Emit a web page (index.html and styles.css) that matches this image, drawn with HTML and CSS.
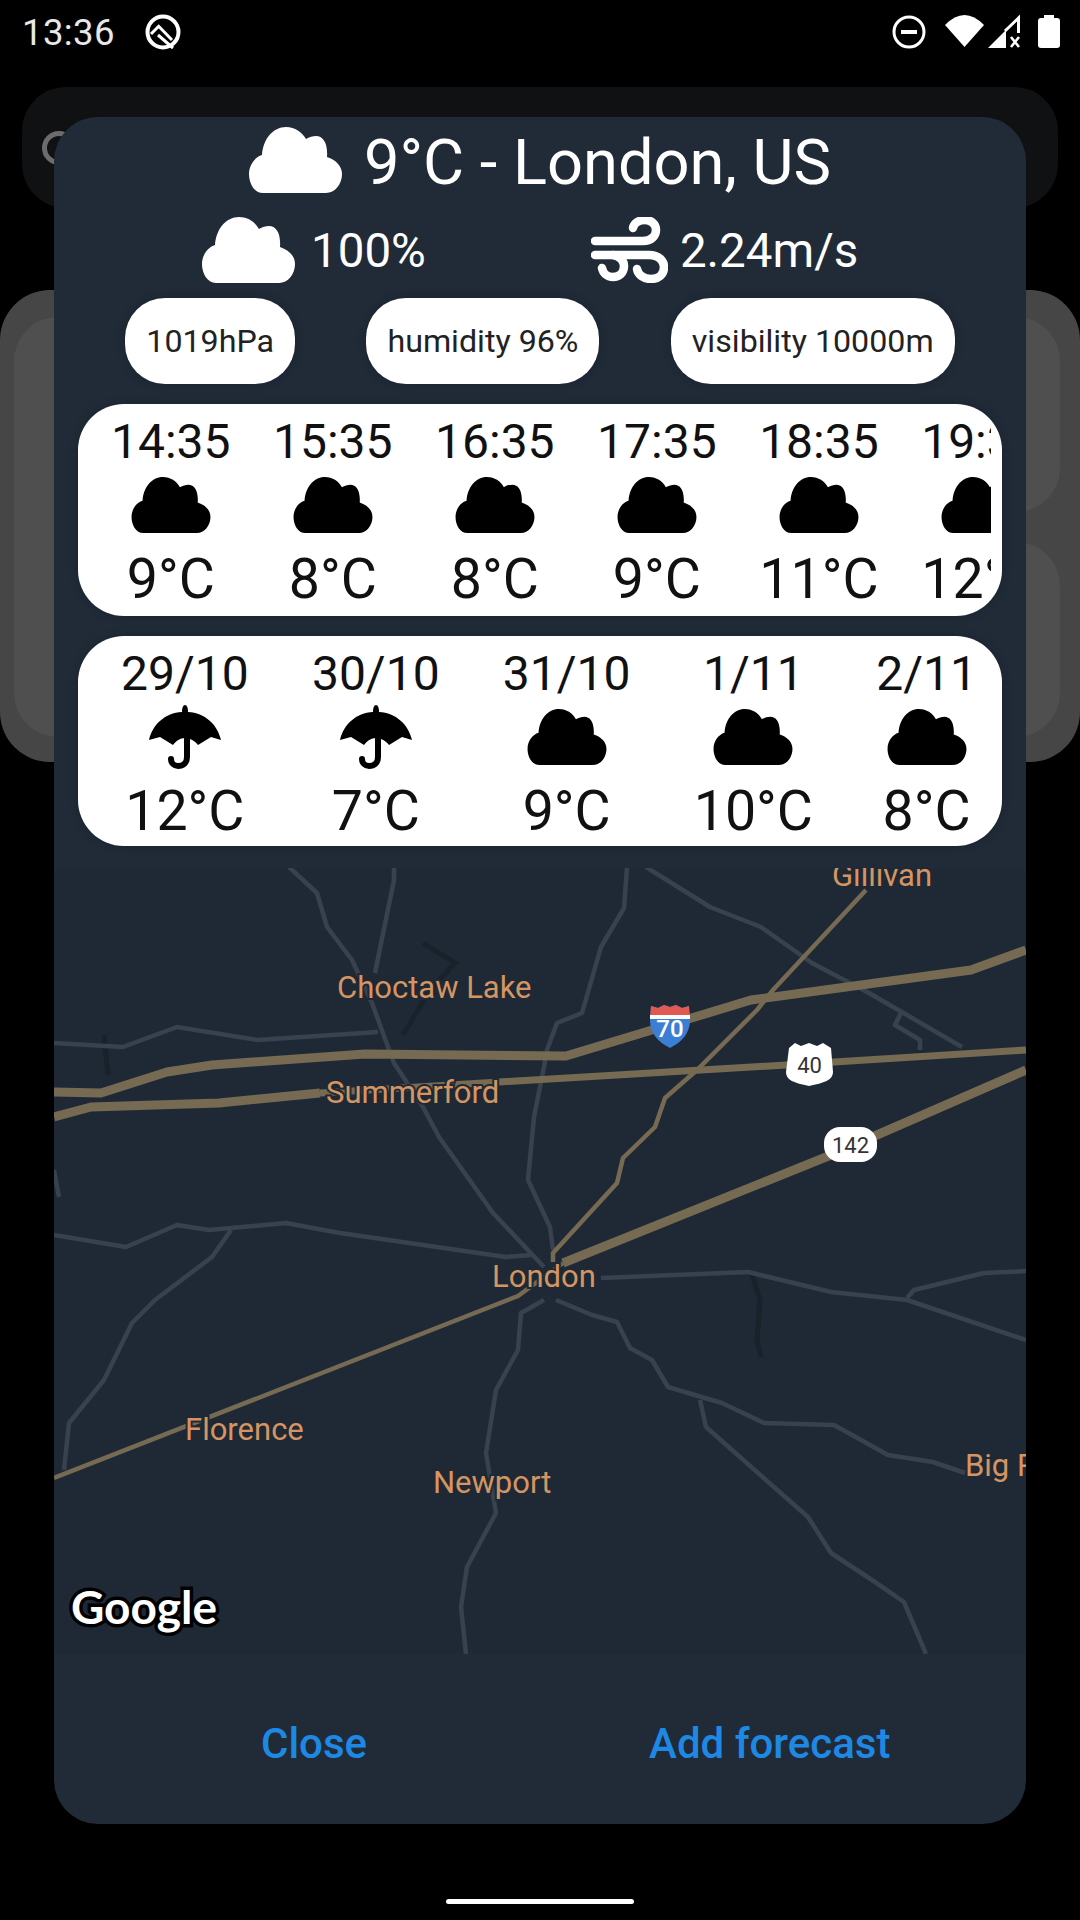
FILE: index.html
```html
<!DOCTYPE html>
<html lang="en">
<head>
    <meta charset="UTF-8">
    <meta name="viewport" content="width=device-width, initial-scale=1.0">
    <title>Weather</title>
    <link rel="stylesheet" href="styles.css">
</head>

<body>
    <svg class="defs" width="0" height="0">
        <symbol id="icoCloud" viewBox="0 0 93 66">
            <path d="M14 66C5 66 0 56 0 47C0 38 6 30 13 28C14 12 24 0 37 0C46 0 53 5 57 12C60 10 64 9 67 9C74 9 79 16 78 30C87 33 93 39 93 47C93 57 86 66 77 66Z"/>
        </symbol>
        <symbol id="icoUmbrella" viewBox="0 0 72 64">
            <path d="M36 0C38 0 39 3 39 7C56 8 68 19 72 35L62 32L49 40C46 36 41 33 36 33C31 33 27 36 24 40L11 32L0 35C4 19 16 8 33 7C33 3 34 0 36 0Z"/>
            <path d="M38 34V52C38 58 34 61 29 61C25 61 22 58 22 54" fill="none" stroke="currentColor" stroke-width="6" stroke-linecap="round"/>
        </symbol>
    </svg>

    <div class="page">
        <!-- status bar -->
        <div class="status">
            <span class="clock">13:36</span>
            <svg class="icoQ" viewBox="0 0 38 38">
                <circle cx="19" cy="19" r="15.5" fill="none" stroke="#fff" stroke-width="4"/>
                <path d="M7 21L14.700 13.300L28 27M14 22L29 35" fill="none" stroke="#fff" stroke-width="3"/>
            </svg>
            <svg class="statusRight" viewBox="888 8 180 46">
                <circle cx="909" cy="31" r="15" fill="none" stroke="#fff" stroke-width="3"/>
                <rect x="901" y="29" width="16" height="4" fill="#fff"/>
                <path d="M945 24Q964.500 4 984 24L964.500 46Z" fill="#fff"/>
                <path d="M988 47L1006 29V47Z" fill="#fff"/>
                <path d="M1005 30L1018.500 17V32" fill="none" stroke="#fff" stroke-width="3"/>
                <path d="M1011 36L1019 46M1019 36L1011 46" fill="none" stroke="#fff" stroke-width="2.600"/>
                <rect x="1038" y="17" width="22" height="30" rx="3" fill="#fff"/>
                <rect x="1044" y="14" width="10" height="5" fill="#fff"/>
            </svg>
        </div>

        <!-- screen behind the dialog -->
        <div class="searchBar"><span class="searchRing"></span></div>
        <div class="listCard">
            <div class="listLeft"></div>
            <div class="listRight">
                <div class="listItem"></div>
                <div class="listItem"></div>
            </div>
        </div>

        <div class="homeBar"></div>
    </div>

    <div class="dialog">
        <div class="headRow">
            <svg class="icoBig"><use href="#icoCloud"/></svg>
            <span class="headText">9°C - London, US</span>
        </div>

        <div class="infoRow">
            <div class="infoPart">
                <svg class="icoBig"><use href="#icoCloud"/></svg>
                <span class="infoText">100%</span>
            </div>
            <div class="infoPart">
                <svg class="icoWind" viewBox="0 0 77 66">
                    <g fill="none" stroke="#fff" stroke-width="8.500" stroke-linecap="round">
                        <path d="M4 24H52C60 24 65 19 65 13C65 7 60 3 54 3C48 3 43 6 42 11"/>
                        <path d="M4 38H58C68 38 73 44 73 50C73 58 67 62 60 62C53 62 47 58 46 52"/>
                        <path d="M22 38C29 39 33 44 33 49C33 56 28 60 22 60C16 60 12 56 11 51"/>
                    </g>
                </svg>
                <span class="infoText">2.24m/s</span>
            </div>
        </div>

        <div class="chipRow">
            <span class="chip">1019hPa</span>
            <span class="chip">humidity 96%</span>
            <span class="chip">visibility 10000m</span>
        </div>

        <div class="foreCard hourCard">
            <div class="foreList">
                <div class="foreItem"><span class="foreTime">14:35</span><svg class="icoSmall"><use href="#icoCloud"/></svg><span class="foreTemp">9°C</span></div>
                <div class="foreItem"><span class="foreTime">15:35</span><svg class="icoSmall"><use href="#icoCloud"/></svg><span class="foreTemp">8°C</span></div>
                <div class="foreItem"><span class="foreTime">16:35</span><svg class="icoSmall"><use href="#icoCloud"/></svg><span class="foreTemp">8°C</span></div>
                <div class="foreItem"><span class="foreTime">17:35</span><svg class="icoSmall"><use href="#icoCloud"/></svg><span class="foreTemp">9°C</span></div>
                <div class="foreItem"><span class="foreTime">18:35</span><svg class="icoSmall"><use href="#icoCloud"/></svg><span class="foreTemp">11°C</span></div>
                <div class="foreItem"><span class="foreTime">19:35</span><svg class="icoSmall"><use href="#icoCloud"/></svg><span class="foreTemp">12°C</span></div>
            </div>
        </div>

        <div class="foreCard dayCard">
            <div class="foreList">
                <div class="foreItem"><span class="foreTime">29/10</span><svg class="icoRain"><use href="#icoUmbrella"/></svg><span class="foreTemp">12°C</span></div>
                <div class="foreItem"><span class="foreTime">30/10</span><svg class="icoRain"><use href="#icoUmbrella"/></svg><span class="foreTemp">7°C</span></div>
                <div class="foreItem"><span class="foreTime">31/10</span><svg class="icoSmall"><use href="#icoCloud"/></svg><span class="foreTemp">9°C</span></div>
                <div class="foreItem"><span class="foreTime">1/11</span><svg class="icoSmall"><use href="#icoCloud"/></svg><span class="foreTemp">10°C</span></div>
                <div class="foreItem"><span class="foreTime">2/11</span><svg class="icoSmall"><use href="#icoCloud"/></svg><span class="foreTemp">8°C</span></div>
            </div>
        </div>

        <!-- map: coordinates are those of the screen -->
        <svg class="map" viewBox="54 868 972 786">
            <g class="water">
                <path d="M423 943L455 963L430 990L403 1035"/>
                <path d="M751 1272L760 1300L757 1340L761 1357"/>
                <path d="M104 1035L108 1075"/>
            </g>
            <g class="roadMinor">
                <path d="M289 867L317 893L327 927L352 960L372 1003L388 1047L394 1063L423 1107L439 1137L493 1213L544 1267"/>
                <path d="M394 867V880L375 973"/>
                <path d="M627 867L624 908L601 947L582 1013L557 1023L547 1050L544 1067L534 1117L528 1180L550 1227L553 1250"/>
                <path d="M646 867L710 907L761 927L812 963L869 993L962 1047"/>
                <path d="M901 1013L895 1025L920 1040V1050"/>
                <path d="M54 1043L123 1047L177 1027L257 1040L378 1032"/>
                <path d="M54 1235L126 1247L177 1225L209 1230L286 1223L340 1233L506 1257L531 1255"/>
                <path d="M231 1230L212 1257L155 1300L132 1323L104 1380L69 1423L64 1470"/>
                <path d="M601 1278L748 1272L831 1292L907 1300L1026 1340"/>
                <path d="M907 1298L914 1290L984 1273L1026 1271"/>
                <path d="M556 1300L592 1315L617 1322L630 1348L652 1360L668 1387L722 1403L764 1423L834 1425L888 1455L933 1462L965 1473"/>
                <path d="M700 1400L706 1427L808 1517L831 1553L875 1582L904 1602L926 1654"/>
                <path d="M544 1300L521 1313L518 1350L496 1390L486 1453L496 1513L467 1567L461 1607L466 1654"/>
                <path d="M54 1170L59 1197"/>
            </g>
            <g class="roadMajor">
                <path class="roadWide" d="M54 1092L101 1093L167 1072L212 1065L365 1054L566 1056L652 1030L751 1000L971 970L1026 950"/>
                <path class="roadWide" d="M54 1117L91 1107L219 1103L320 1093"/>
                <path class="roadMid" d="M320 1093L499 1082L786 1065L1026 1050"/>
                <path class="roadWide" d="M563 1263L831 1155L1026 1070"/>
                <path class="roadThin" d="M563 1263L518 1296L54 1478"/>
                <path class="roadThin" d="M866 890L773 990L757 1010L697 1070L665 1098L655 1127L623 1158L617 1183L553 1253V1262"/>
            </g>

            <!-- I-70 -->
            <path d="M650 1020L651 1006L658 1008L664 1005L670 1007L676 1005L682 1008L689 1006L690 1020C690 1033 682 1042 670 1048C658 1042 650 1033 650 1020Z" fill="#3a7fd5"/>
            <path d="M650 1019L651 1006L658 1008L664 1005L670 1007L676 1005L682 1008L689 1006L690 1019Z" fill="#e05a52"/>
            <rect x="650" y="1015" width="40" height="4" fill="#fff"/>
            <text class="shieldText shieldLight" x="670" y="1037">70</text>
            <!-- US 40 -->
            <path d="M789 1048L795 1043L801 1046L809 1043L817 1046L823 1043L831 1048L833 1072C833 1080 824 1083 809 1086C794 1083 786 1080 786 1072Z" fill="#fff"/>
            <text class="shieldText" x="809.500" y="1073">40</text>
            <!-- 142 -->
            <rect x="824" y="1127" width="53" height="35" rx="16" fill="#fff"/>
            <text class="shieldText" x="850.500" y="1153">142</text>

            <text class="place" x="337" y="998">Choctaw Lake</text>
            <text class="place" x="326" y="1103">Summerford</text>
            <text class="place" x="832" y="886">Gillivan</text>
            <text class="place" x="492" y="1287">London</text>
            <text class="place" x="185" y="1440">Florence</text>
            <text class="place" x="433" y="1493">Newport</text>
            <text class="place" x="965" y="1476">Big Prairie</text>
            <text class="googleMark" x="71" y="1624">Google</text>
        </svg>

        <div class="btnRow">
            <span class="btn">Close</span>
            <span class="btn">Add forecast</span>
        </div>
    </div>
</body>
</html>
```

FILE: styles.css
```css
body {
    margin: 0;
    background-color: #000;
    font-family: Roboto, "Liberation Sans", sans-serif;
}
.defs {
    position: absolute;
}
.page {
    width: 1080px;
    height: 1920px;
    display: flex;
    flex-direction: column;
    overflow: hidden;
}

/* status bar */
.status {
    height: 64px;
    display: flex;
    align-items: center;
    padding-left: 22px;
    color: #e8e8e8;
}
.clock {
    font-size: 36.5px;
    letter-spacing: 0.4px;
}
.icoQ {
    width: 38px;
    height: 38px;
    margin-left: 29px;
}
.statusRight {
    width: 180px;
    height: 46px;
    margin-left: auto;
    margin-right: 12px;
}

/* what lies behind the dialog */
.searchBar {
    height: 121px;
    margin: 23px 22px 0 22px;
    padding-left: 20px;
    display: flex;
    align-items: center;
    background-color: #101112;
    border-radius: 44px;
}
.searchRing {
    width: 24px;
    height: 24px;
    border: 5px solid #6c6c6c;
    border-radius: 50%;
}
.listCard {
    height: 472px;
    margin-top: 82px;
    padding: 27px 20px 25px 14px;
    box-sizing: border-box;
    display: flex;
    gap: 20px;
    background-color: #464646;
    border-radius: 50px;
}
.listLeft {
    flex: 1;
    background-color: #4f4f4f;
    border-radius: 44px;
}
.listRight {
    flex: 1;
    display: flex;
    flex-direction: column;
    gap: 30px;
}
.listItem {
    flex: 1;
    background-color: #4f4f4f;
    border-radius: 44px;
}
.homeBar {
    width: 188px;
    height: 5px;
    margin: auto auto 16px auto;
    background-color: #fff;
    border-radius: 3px;
}

/* dialog */
.dialog {
    position: absolute;
    left: 54px;
    top: 117px;
    width: 972px;
    height: 1707px;
    padding-top: 10px;
    box-sizing: border-box;
    background-color: #212b38;
    border-radius: 44px;
    color: #fff;
}
.icoBig {
    width: 93px;
    height: 66px;
    fill: #fff;
}
.headRow {
    display: flex;
    justify-content: center;
    align-items: flex-start;
    gap: 22px;
}
.headText {
    height: 66px;
    font-size: 63.2px;
    line-height: 70px;
}
.infoRow {
    display: flex;
    margin-top: 24px;
    padding-left: 148px;
    gap: 165px;
}
.infoPart {
    display: flex;
    align-items: flex-start;
    gap: 16px;
}
.infoText {
    height: 66px;
    font-size: 47.5px;
    line-height: 68px;
}
.icoWind {
    width: 77px;
    height: 66px;
    margin-right: -4px;
}
.chipRow {
    display: flex;
    justify-content: space-evenly;
    margin-top: 15px;
}
.chip {
    height: 86px;
    padding: 0 21px;
    display: flex;
    align-items: center;
    background-color: #fff;
    border-radius: 40px;
    box-shadow: 0 0 8px rgba(15, 20, 28, 0.35);
    color: #222;
    font-size: 32.2px;
}

/* forecast cards */
.foreCard {
    margin: 20px 24px 0 24px;
    padding: 10px 11px 0 11px;
    background-color: #fff;
    border-radius: 46px;
    box-shadow: 0 0 8px rgba(15, 20, 28, 0.35);
    color: #111;
}
.hourCard {
    height: 202px;
}
.dayCard {
    height: 200px;
}
.foreList {
    display: flex;
    overflow: hidden;
    padding-bottom: 6px;
}
.hourCard .foreList {
    padding-left: 22px;
    gap: 42.5px;
}
.dayCard .foreList {
    padding-left: 32px;
    gap: 63.2px;
}
.foreItem {
    flex: none;
    display: flex;
    flex-direction: column;
    align-items: center;
}
.foreTime {
    font-size: 48px;
    line-height: 56px;
}
.icoSmall {
    width: 80px;
    height: 56px;
    margin: 7px 0 13.5px 0;
    fill: #000;
}
.icoRain {
    width: 72px;
    height: 64px;
    margin: 3px 0 9.5px 0;
    fill: #000;
    color: #000;
}
.foreTemp {
    font-size: 55.5px;
    line-height: 66px;
    margin-bottom: -5px;
}

/* map */
.map {
    display: block;
    width: 972px;
    height: 786px;
    margin-top: 22px;
    background-color: #1f2935;
}
.water path {
    fill: none;
    stroke: #19212b;
    stroke-width: 5;
}
.roadMinor path {
    fill: none;
    stroke: #38424f;
    stroke-width: 4.5;
    stroke-linejoin: round;
}
.roadMajor path {
    fill: none;
    stroke: #766a53;
    stroke-linejoin: round;
}
.roadWide {
    stroke-width: 9;
}
.roadMid {
    stroke-width: 7;
}
.roadThin {
    stroke-width: 4.5;
}
.shieldText {
    fill: #333;
    font-size: 22px;
    text-anchor: middle;
}
.shieldLight {
    fill: #fff;
    font-size: 24px;
    font-weight: 500;
}
.place {
    fill: #d59563;
    font-size: 31px;
    stroke: #1f2935;
    stroke-width: 4px;
    paint-order: stroke;
}
.googleMark {
    fill: #fff;
    font-family: Lato, sans-serif;
    font-size: 46px;
    font-weight: 700;
    stroke: #000;
    stroke-width: 7px;
    paint-order: stroke;
}
.btnRow {
    display: flex;
    padding: 67px 0 0 207px;
    gap: 282px;
}
.btn {
    color: #1e88e5;
    font-size: 42px;
    font-weight: 500;
    line-height: 46px;
}
```
